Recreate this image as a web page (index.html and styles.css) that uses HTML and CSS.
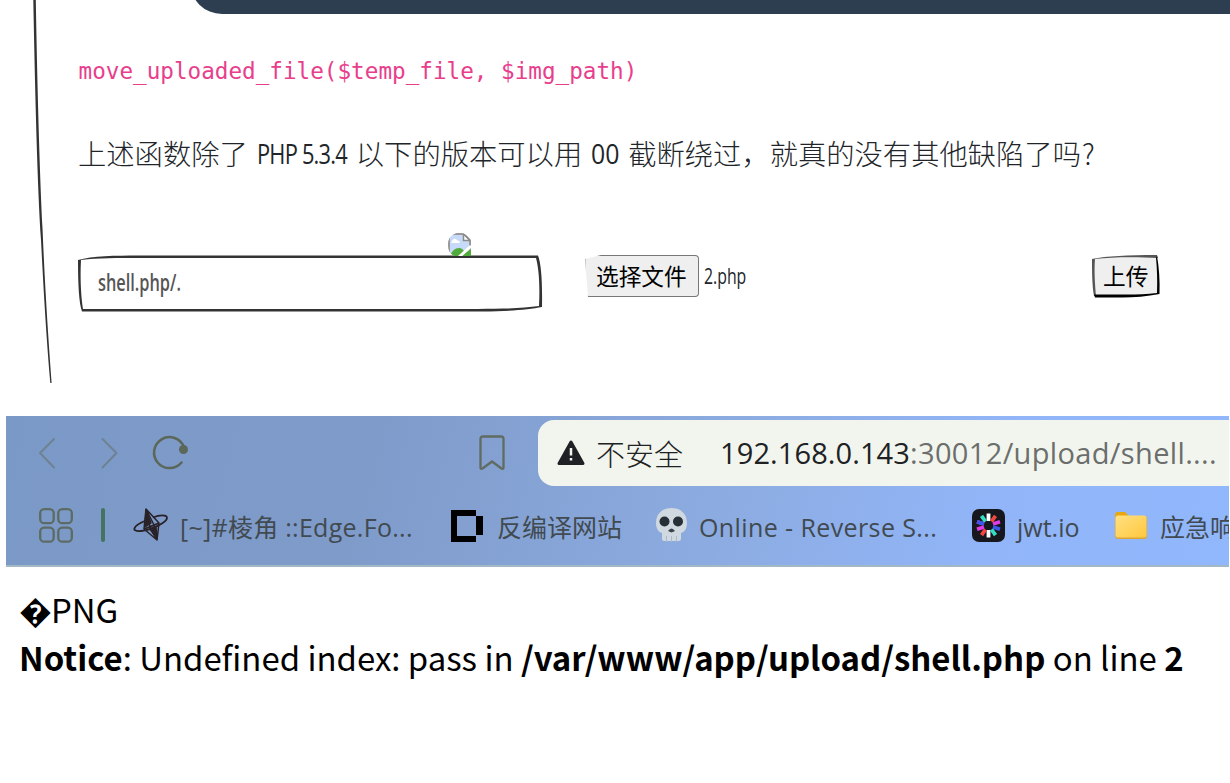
FILE: index.html
```html
<!DOCTYPE html>
<html lang="zh-CN">
<head>
<meta charset="utf-8">
<title>upload-labs</title>
<link rel="stylesheet" href="styles.css">
</head>
<body>
<section class="lab">
  <svg class="edge" width="60" height="383" viewBox="0 0 60 383"><path d="M33.3 0C35 90 37.5 190 41 240C44 300 47 345 50.3 383L51.6 383C48.5 340 45 290 42.6 230C39.5 170 37.2 80 35.8 0Z"/></svg>
  <div class="banner"></div>
  <code class="snippet">move_uploaded_file($temp_file, $img_path)</code>
  <p class="question"><span>上述函数除了</span><span class="hand hand-php"><span>PHP 5.3.4</span></span><span>以下的版本可以用</span><span class="hand hand-zero"><span>00</span></span><span>截断绕过，就真的没有其他缺陷了吗<span class="qmark">?</span></span></p>
  <form class="form">
    <div class="field">
      <svg class="frame" width="464" height="57" viewBox="0 0 464 57"><path fill-rule="evenodd" d="M0 5C14 1 38 .5 60 .5H460C463 8 464.500 25 464 52C451 54.500 430 56.500 405 56.500H4C1 48 0 30 0 5ZM3 5C2 23 3 42 5 54H400C425 54 445 53 461 51C462 31 461 14 458 3H60C40 3 20 3 3 5Z"/></svg>
      <span class="typed">shell.php/.</span>
      <svg class="broken" width="23" height="23" viewBox="0 0 23 23">
        <defs><clipPath id="round"><path d="M0 12A11.500 11.500 0 0 1 19 2.500L23 7V23H6A12 12 0 0 1 0 12Z"/></clipPath></defs>
        <g clip-path="url(#round)"><path fill="#c7dafa" stroke="#999" stroke-width="2" d="M1 1H16L22 7V24H1Z"/><path fill="#fff" d="M4 8Q6 4 9 7Q12 8 12 10H3ZM15 1V8H22Z"/><path fill="#52ac3c" d="M2 23Q5 15 11 15Q15 15 17 20L23 16V23Z"/><path stroke="#fff" stroke-width="3" d="M11 24L23 13"/><path fill="none" stroke="#8b8b8b" stroke-width="1.500" d="M15.500 1V7.500H22M15.500 1L22 7.500"/></g>
      </svg>
    </div>
    <div class="picker"><span class="choose">选择文件</span><span class="filename">2.php</span></div>
    <div class="submit">
      <svg class="frame" width="68" height="43" viewBox="0 0 68 43"><path fill="#efefef" d="M2 3L65 2L66 40L3 41Z"/><path fill="#555" d="M0 4C15 1 35 0 65 0L66 3C45 2 20 2 3 4C2 15 3 30 4 41H2C0 30 0 15 0 4Z"/><path d="M65 1C67 12 68 25 67.500 39C55 41.500 42 42.500 30 42.500H3L2 39.500H35C45 39.500 55 39.500 65 38C65.500 25 65 13 64 3Z"/></svg>
      <span>上传</span>
    </div>
  </form>
</section>

<section class="browser">
  <div class="nav">
    <svg class="arrows" width="190" height="70" viewBox="0 0 190 70" fill="none" stroke-linecap="round" stroke-linejoin="round"><path stroke="#6e8291" stroke-width="2" d="M48 23L34 37L48 51.500M96.500 23L110.500 37L96.500 51.500"/><path stroke="#5b6758" stroke-width="2.500" d="M175.500 46.500A15.500 15.500 0 1 1 178 31"/><circle cx="177.500" cy="33.500" r="4.500" fill="#5b6758"/></svg>
    <svg class="mark" width="26" height="36" viewBox="0 0 26 36" fill="none" stroke="#606b62" stroke-width="2.300" stroke-linejoin="round"><path d="M4 1.500H22Q24.500 1.500 24.500 4V32.500Q24.500 34.500 22.500 33.500L13 26.500L3.500 33.500Q1.500 34.500 1.500 32.500V4Q1.500 1.500 4 1.500Z"/></svg>
    <div class="address">
      <svg width="28" height="26" viewBox="0 0 28 26"><path fill="#202124" stroke="#202124" stroke-width="3" stroke-linejoin="round" d="M14 2L26 23.500H2Z"/><path stroke="#f2f5ed" stroke-width="2.500" d="M14 8V15.500M14 18V20.500"/></svg>
      <span class="unsafe">不安全</span>
      <span class="url"><b>192.168.0.143</b>:30012/upload/shell....</span>
    </div>
  </div>
  <div class="bookmarks">
    <svg class="apps" width="34" height="35" viewBox="0 0 34 35" fill="none" stroke="#5c6b63" stroke-width="2.300"><rect x="1.200" y="1.200" width="13.500" height="14" rx="4"/><rect x="19.300" y="1.200" width="13.500" height="14" rx="4"/><rect x="1.200" y="19.700" width="13.500" height="14" rx="4"/><rect x="19.300" y="19.700" width="13.500" height="14" rx="4"/></svg>
    <i class="divider"></i>
    <svg class="b1" width="34" height="34" viewBox="0 0 34 34" fill="none" stroke="#292229" stroke-width="1.500" stroke-linejoin="round"><path d="M12 1L10 21L23 32L25 15ZM12 1L16 19L23 32M10 21L25 15M10 21L16 19L25 15M12 1L20 17L23 32"/><path stroke-width="1.800" d="M12 12.500C-2 18-3 24 7 23C18 22 33 14 33 10C33 6 25 7 19 9.500"/><path fill="#292229" d="M12 2L11 19L17 15ZM16 21L23 31L22 19Z"/></svg>
    <span class="t1">[~]#棱角 ::Edge.Fo...</span>
    <svg class="b2" width="32" height="32" viewBox="0 0 32 32"><path fill-rule="evenodd" d="M0 0H25V6H32V25H25V32H0ZM6 6V26H25V6Z"/></svg>
    <span class="t2">反编译网站</span>
    <svg class="b3" width="31" height="34" viewBox="0 0 31 34"><path fill="#d0d8e0" d="M15.500 0C25 0 31 6 31 15C31 20 29 24 25 25V31Q25 33 23 33H8Q6 33 6 31V25C2 24 0 20 0 15C0 6 6 0 15.500 0Z"/><circle cx="8.500" cy="13.500" r="5" fill="#263036"/><circle cx="22" cy="13.500" r="5" fill="#263036"/><path fill="#39434a" d="M12 23Q15.500 18 19 23L15.500 24.500Z"/><path stroke="#a9b9ce" d="M10.500 28V34M15.500 28V34M20.500 28V34"/></svg>
    <span class="t3">Online - Reverse S...</span>
    <svg class="b4" width="33" height="33" viewBox="0 0 33 33"><rect width="33" height="33" rx="7" fill="#16181d"/><g transform="translate(16.500 16.500)" stroke-width="3.800"><path stroke="#fff" d="M0-12V-4.500M0 12V4.500"/><path stroke="#f0483e" d="M7-9.700L3-4M-7 9.700L-3 4"/><path stroke="#df3ce6" d="M11.500-3.700L4.500-1.500M-11.500 3.700L-4.500 1.500M-11.500-3.700L-4.500-1.500"/><path stroke="#3c56ec" d="M11.500 3.700L4.500 1.500M-11.500-3.700L-4.500-1.500"/><path stroke="#35dfc4" d="M7 9.700L3 4M-7-9.700L-3-4"/></g></svg>
    <span class="t4">jwt.io</span>
    <svg class="b5" width="32" height="27" viewBox="0 0 32 27"><defs><linearGradient id="gold" x2="1" y2="1"><stop stop-color="#ffe083"/><stop offset="1" stop-color="#ffc83d"/></linearGradient></defs><path fill="#e7a80f" d="M0 3Q0 0 3 0H10L14 4H29Q32 4 32 7V12H0Z"/><rect y="4" width="32" height="23" rx="3" fill="#d9a637"/><rect x=".5" y="3.500" width="31" height="22" rx="2.500" fill="url(#gold)"/></svg>
    <span class="t5">应急响</span>
  </div>
</section>

<main class="output"><div class="png"><span class="bad">�</span>PNG</div><div class="notice"><b>Notice</b>: Undefined index: pass in <b>/var/www/app/upload/shell.php</b> on line <b>2</b></div></main>
</body>
</html>
```
FILE: styles.css
```css
* { box-sizing: border-box; }
body { margin: 0; width: 1230px; height: 783px; overflow: hidden; background: #fff; color: #000; font-family: "Noto Sans CJK SC", sans-serif; }
svg { display: block; flex: none; overflow: visible; }
span { white-space: nowrap; }

.lab { position: relative; height: 383px; padding-left: 78px; overflow: hidden; }
.edge { position: absolute; left: 0; top: 0; fill: #333; }
.banner { height: 54px; margin: -40px 0 0 112px; background: #2c3e50; border-bottom-left-radius: 32px; }
.snippet { display: block; margin: 43px 0 0 .5px; line-height: 28px; font-family: "DejaVu Sans Mono", monospace; font-size: 22.650px; color: #e83e8c; }
.question { display: flex; margin: 48px 0 0; height: 40px; line-height: 40px; font-size: 28.300px; font-weight: 300; color: #212529; }
.hand { font-family: "Open Sans", sans-serif; font-weight: 400; }
.hand span { display: inline-block; transform-origin: left center; }
.hand-php { width: 108px; padding-left: 9px; }
.hand-php span { transform: scaleX(.81); letter-spacing: -1px; font-size: 27px; }
.hand-zero { width: 46px; padding-left: 9px; }
.hand-zero span { transform: scaleX(.92); font-size: 27px; }
.qmark { display: inline-block; margin-left: 1px; }

.form { display: flex; align-items: flex-start; margin: 82px 0 0; height: 57px; }
.field { position: relative; width: 464px; height: 57px; padding: 10px 0 0 20px; }
.frame { position: absolute; left: 0; top: 0; fill: #333; }
.broken { position: absolute; left: 370px; top: -22px; }
.typed { position: relative; display: inline-block; line-height: 34px; font-family: "Open Sans", sans-serif; font-weight: 600; font-size: 23px; color: #555; transform: scaleX(.71); transform-origin: left; }
.picker { display: flex; margin-left: 43px; width: 507px; height: 42px; line-height: 40px; }
.choose { width: 114px; border: 1px solid #777; border-left-color: #bbb; border-radius: 4px; background: #efefef; padding-left: 10px; font-size: 22.700px; clip-path: polygon(0 4px, 16px 0, 100% 0, 100% 100%, 3px 100%); }
.filename { margin-left: 5px; font-family: "Open Sans", sans-serif; font-size: 22px; color: #212529; transform: scaleX(.72); transform-origin: left; }
.submit { position: relative; width: 68px; height: 43px; padding-left: 11px; line-height: 41px; font-size: 22.700px; }
.submit .frame { fill: #000; }
.submit span { position: relative; }

.browser { margin: 33px 1px 0 6px; height: 151px; background: linear-gradient(105deg, #7b99c7 0%, #7f9bca 30%, #8cabe0 58%, #91b5f8 80%, #91b7fc 100%); border-bottom: 2px solid #a3b8c5; overflow: hidden; }
.nav { display: flex; height: 75px; }
.mark { margin: 19px 0 0 283px; }
.address { display: flex; align-items: center; width: 720px; flex: none; height: 66px; margin: 4px 0 0 33px; padding-left: 19px; border-radius: 16px 0 0 16px; background: #f2f5ed; }
.unsafe { margin-left: 11px; font-size: 29px; line-height: 60px; font-weight: 300; color: #202124; }
.url { margin-left: 37px; font-family: "Open Sans", sans-serif; font-size: 29px; line-height: 60px; letter-spacing: .35px; color: #6b6e6c; }
.url b { font-weight: 400; letter-spacing: .1px; color: #202124; }
.bookmarks { display: flex; align-items: center; height: 72px; padding-left: 33px; font-family: "Open Sans", "Noto Sans CJK SC", sans-serif; font-size: 25px; color: #414a50; }
.bookmarks span { flex: none; line-height: 36px; }
.apps { margin-top: -4px; }
.divider { flex: none; width: 4px; height: 34px; margin: -5px 0 0 28px; border-radius: 2px; background: #45735f; }
.b1 { margin: -4px 0 0 29px; }
.t1 { width: 271px; margin-left: 12px; letter-spacing: .28px; }
.b2 { margin-top: -2px; }
.t2 { width: 159px; margin-left: 14px; }
.b3 { margin-top: -4px; }
.t3 { width: 273px; margin-left: 12px; letter-spacing: .4px; }
.b4 { margin-top: -4px; }
.t4 { width: 98px; margin-left: 12px; }
.b5 { margin-top: -4px; }
.t5 { margin-left: 13px; }

.output { padding: 18px 0 0 19px; font-size: 32.920px; line-height: 48px; }
.png, .notice { height: 48px; white-space: nowrap; }
.bad { display: inline-block; width: 32px; }
.output b { font-weight: 700; }
```
